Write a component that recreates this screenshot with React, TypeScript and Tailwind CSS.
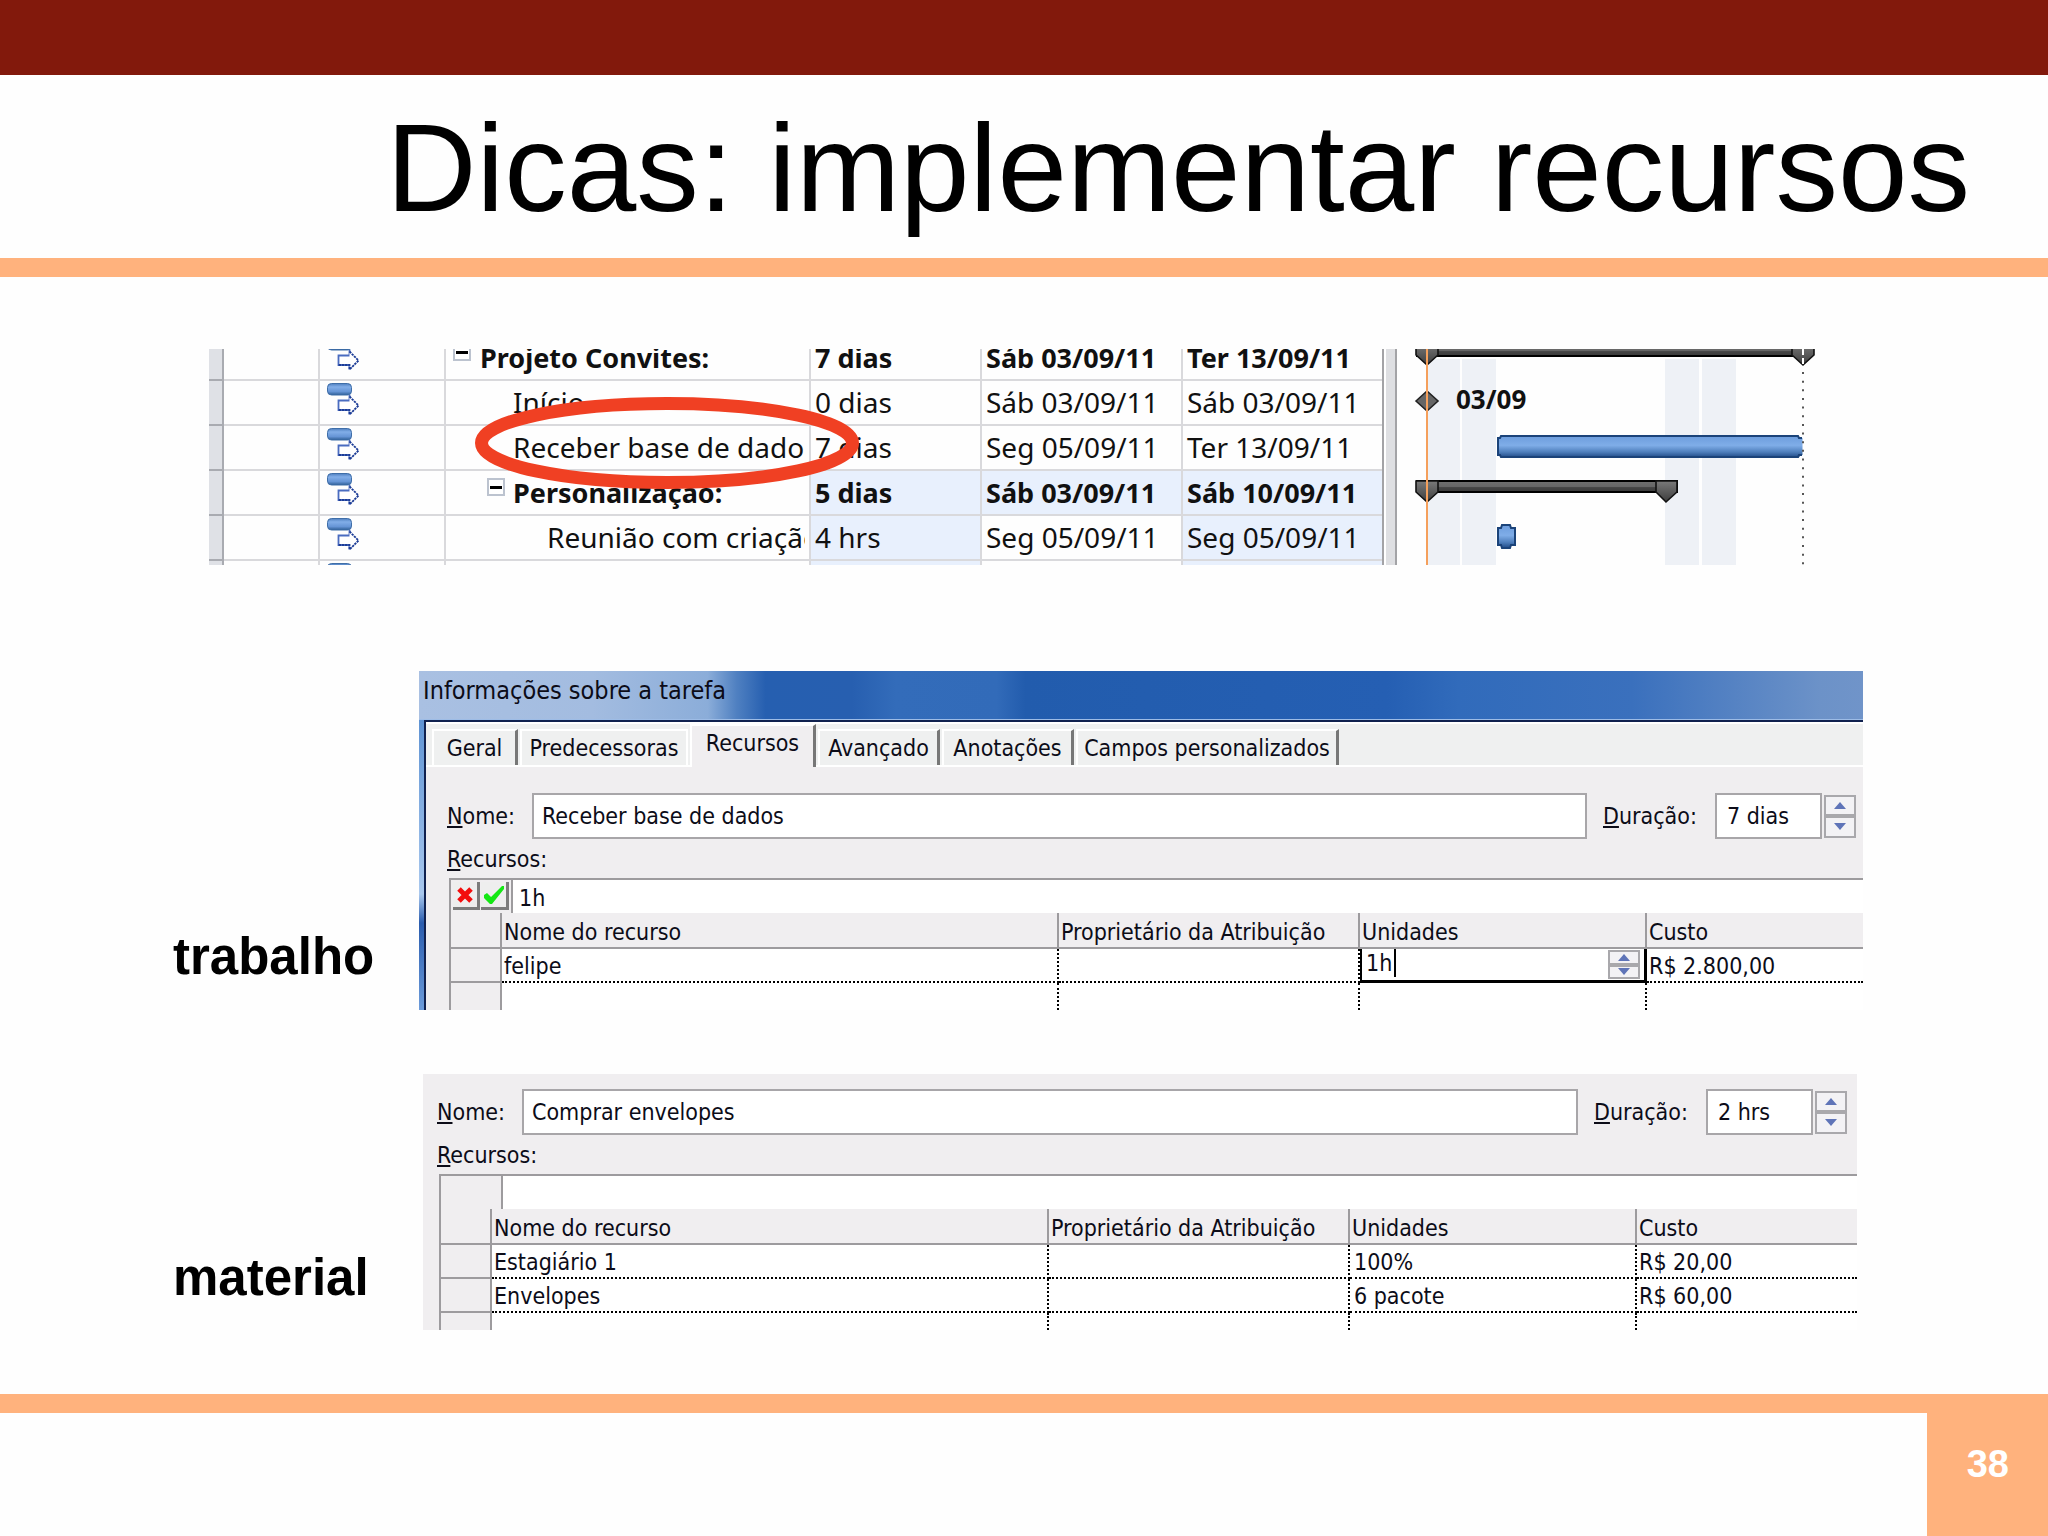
import { useState } from 'react'
import type { ReactNode } from 'react'

interface TaskRow {
  name: string
  level: 1 | 2 | 3
  duration: string
  start: string
  finish: string
  bold?: boolean
  collapsible?: boolean
  shaded?: 'all' | 'outer'
}

interface Resource {
  name: string
  units: string
  cost: string
  editing?: boolean
}

const tasks: TaskRow[] = [
  { name: 'Projeto Convites:', level: 1, duration: '7 dias', start: 'Sáb 03/09/11', finish: 'Ter 13/09/11', bold: true, collapsible: true },
  { name: 'Início', level: 2, duration: '0 dias', start: 'Sáb 03/09/11', finish: 'Sáb 03/09/11' },
  { name: 'Receber base de dado', level: 2, duration: '7 dias', start: 'Seg 05/09/11', finish: 'Ter 13/09/11' },
  { name: 'Personalização:', level: 2, duration: '5 dias', start: 'Sáb 03/09/11', finish: 'Sáb 10/09/11', bold: true, collapsible: true, shaded: 'all' },
  { name: 'Reunião com criação', level: 3, duration: '4 hrs', start: 'Seg 05/09/11', finish: 'Seg 05/09/11', shaded: 'outer' },
  { name: '', level: 2, duration: '', start: '', finish: '', shaded: 'outer' },
]

const indent = {
  1: 'pl-[34px]',
  2: 'pl-[67px]',
  3: 'pl-[101px]',
}

const togglePosition = {
  1: 'left-[7px]',
  2: 'left-[41px]',
  3: 'left-[75px]',
}

const tabs = [
  { label: 'Geral', width: 'w-[86px]' },
  { label: 'Predecessoras', width: 'w-[168px]' },
  { label: 'Recursos', width: 'w-[126px]' },
  { label: 'Avançado', width: 'w-[122px]' },
  { label: 'Anotações', width: 'w-[132px]' },
  { label: 'Campos personalizados', width: 'w-[263px]' },
]

const laborResources: Resource[] = [{ name: 'felipe', units: '1h', cost: 'R$ 2.800,00', editing: true }]

const materialResources: Resource[] = [
  { name: 'Estagiário 1', units: '100%', cost: 'R$ 20,00' },
  { name: 'Envelopes', units: '6 pacote', cost: 'R$ 60,00' },
]

function AutoScheduleIcon() {
  return (
    <svg width="36" height="43" viewBox="0 0 36 43" className="block">
      <defs>
        <linearGradient id="pill" x1="0" y1="0" x2="0" y2="1">
          <stop offset="0" stopColor="#4f7fbf" />
          <stop offset="0.3" stopColor="#82aee8" />
          <stop offset="0.7" stopColor="#6695d6" />
          <stop offset="1" stopColor="#2f5f96" />
        </linearGradient>
      </defs>
      <path d="M23.5 14V19.5H12.5V29H23.5V33.5" fill="#fff" stroke="#4a6cc0" strokeWidth="1.8" />
      <path d="M23.5 15.5 32.5 24.5 23.5 33.5" fill="#fff" />
      <path d="M23.5 15.5 32.5 24.5 23.5 33.5V29H12.5" fill="none" stroke="#1c3c96" strokeWidth="1.8" strokeDasharray="2.4 0.8" />
      <rect x="1.5" y="2.5" width="24" height="11.5" rx="4" fill="url(#pill)" stroke="#3f6ea8" />
    </svg>
  )
}

function TaskTable() {
  return (
    <table className="-mt-[13px] w-full table-fixed border-separate border-spacing-0 font-['Noto_Sans',sans-serif] leading-[43px] text-[#111]">
      <colgroup>
        <col className="w-[15px]" />
        <col className="w-24" />
        <col className="w-[126px]" />
        <col />
        <col className="w-[171px]" />
        <col className="w-[201px]" />
        <col className="w-[199px]" />
      </colgroup>
      <tbody>
        {tasks.map((task, idx) => {
          const tint = task.shaded ? 'bg-[#e8f0fd]' : ''
          const middleTint = task.shaded === 'all' ? 'bg-[#e8f0fd]' : ''
          const cell = 'h-[45px] border-b-2 border-r-2 border-[#d9d9dc] p-0 whitespace-nowrap overflow-hidden'
          return (
            <tr key={idx} className={task.bold ? 'text-[27px] font-bold' : 'text-[28px]'}>
              <td className="h-[45px] border-r-2 border-b-2 border-[#a9abb1] bg-[#dfe1e6] p-0" />
              <td className={cell} />
              <td className={`${cell} pl-[6px]`}>
                <AutoScheduleIcon />
              </td>
              <td className={`${cell} relative ${indent[task.level]}`}>
                {task.collapsible && (
                  <button
                    aria-label={task.name}
                    className={`absolute top-[7px] flex size-[18px] items-center justify-center border-2 border-[#bcc3cf] bg-white ${togglePosition[task.level]}`}
                  >
                    <span className="h-[3px] w-3 shrink-0 bg-black" />
                  </button>
                )}
                <div className="mr-1 overflow-hidden">{task.name}</div>
              </td>
              <td className={`${cell} pl-1 ${tint}`}>{task.duration}</td>
              <td className={`${cell} pl-1 ${middleTint}`}>{task.start}</td>
              <td className={`h-[45px] border-b-2 border-[#d9d9dc] p-0 pl-1 whitespace-nowrap ${tint}`}>{task.finish}</td>
            </tr>
          )
        })}
      </tbody>
    </table>
  )
}

function GanttChart() {
  return (
    <svg width="420" height="216" viewBox="0 0 420 216" className="block shrink-0">
      <defs>
        <linearGradient id="task" x1="0" y1="0" x2="0" y2="1">
          <stop offset="0" stopColor="#6c9cdc" />
          <stop offset="0.45" stopColor="#7fade8" />
          <stop offset="0.75" stopColor="#4f7fbc" />
          <stop offset="1" stopColor="#1f4a86" />
        </linearGradient>
        <linearGradient id="summary" x1="0" y1="0" x2="0" y2="1">
          <stop offset="0" stopColor="#707070" />
          <stop offset="0.5" stopColor="#666" />
          <stop offset="0.6" stopColor="#444" />
          <stop offset="1" stopColor="#3a3a3a" />
        </linearGradient>
        <linearGradient id="cap" x1="0" y1="0" x2="0" y2="1">
          <stop offset="0" stopColor="#7a7a7a" />
          <stop offset="1" stopColor="#3c3c3c" />
        </linearGradient>
      </defs>

      {/* weekends */}
      <g fill="#eef1f6">
        <rect x="31" y="10" width="32" height="206" />
        <rect x="65" y="10" width="34" height="206" />
        <rect x="268" y="10" width="34" height="206" />
        <rect x="305" y="10" width="34" height="206" />
      </g>

      <rect x="20" y="-4" width="387" height="11" fill="url(#summary)" stroke="#000" strokeWidth="2" />
      <g fill="url(#cap)" stroke="#111" strokeWidth="1.6">
        <path d="M19 -6H41V6L30 16 19 6Z" />
        <path d="M395 -6H417V6L406 16 395 6Z" />
      </g>
      <path d="M406 0V15" stroke="#fff" strokeWidth="2" strokeDasharray="6 3" />

      <path d="M19 52 30 42 41 52 30 62Z" fill="#666" stroke="#222" strokeWidth="1.6" />
      <text x="59" y="60" fill="#111" className="font-['Noto_Sans',sans-serif] text-[26px] font-bold">
        03/09
      </text>

      <path d="M104 86.5H401L402 89H405.5V106H403L402 108.5H104L103 106H100.5V89H103Z" fill="url(#task)" />
      <path d="M405 89H402L401 87H104L103 89H101V106H103L104 108H401L402 106H405" fill="none" stroke="#1b4379" strokeWidth="2" />

      <rect x="20" y="132" width="260" height="11" fill="url(#summary)" stroke="#000" strokeWidth="2" />
      <g fill="url(#cap)" stroke="#111" strokeWidth="1.6">
        <path d="M19 132H41V143L30 153 19 143Z" />
        <path d="M259 132H280V143L269 153 259 143Z" />
      </g>

      <path d="M105 176H113L114 179H118V196H114L113 199H105L104 196H101V179H104Z" fill="url(#task)" stroke="#1b4379" strokeWidth="2" />

      <path d="M406 23V216" stroke="#555" strokeWidth="2" strokeDasharray="2 6.65" />
      <path d="M30 0V216" stroke="#f5a05c" strokeWidth="2" />
    </svg>
  )
}

function Spinner({ className }: { className: string }) {
  return (
    <div className={`flex shrink-0 flex-col ${className}`}>
      <button aria-label="+" className="flex flex-1 items-center justify-center border-2 border-[#a9a8ac] bg-[#f3f2f5]">
        <svg width="12" height="7" viewBox="0 0 12 7">
          <path d="M0 7 6 0 12 7Z" fill="#5f74b8" />
        </svg>
      </button>
      <button aria-label="-" className="flex flex-1 items-center justify-center border-2 border-[#a9a8ac] bg-[#f3f2f5]">
        <svg width="12" height="7" viewBox="0 0 12 7">
          <path d="M0 0H12L6 7Z" fill="#5f74b8" />
        </svg>
      </button>
    </div>
  )
}

function Hotkey({ children }: { children: string }) {
  return (
    <>
      <span className="underline decoration-2 underline-offset-2">{children[0]}</span>
      {children.slice(1)}
    </>
  )
}

interface TaskFormProps {
  id: string
  name: string
  duration: string
  resources: Resource[]
  entry?: string
  lastRow: string
  costColumn: string
  className: string
  rowEnd: string
}

function TaskForm({ id, name, duration, resources, entry, lastRow, costColumn, className, rowEnd }: TaskFormProps) {
  const head = 'h-9 border-b-2 border-[#9d9b9e] bg-[#f0eef0] p-0 pt-1 pl-[2px] text-left font-normal'
  const dotted = 'border-dotted border-black'
  return (
    <div className={className}>
      <div className={`flex items-center ${rowEnd}`}>
        <label htmlFor={`${id}-name`} className="w-[85px]">
          <Hotkey>Nome:</Hotkey>
        </label>
        <input
          id={`${id}-name`}
          defaultValue={name}
          className="h-[46px] min-w-0 flex-1 border-2 border-[#a8a6a9] bg-white pl-2 outline-none"
        />
        <label htmlFor={`${id}-duration`} className="ml-4 w-[112px]">
          <Hotkey>Duração:</Hotkey>
        </label>
        <input
          id={`${id}-duration`}
          defaultValue={duration}
          className="h-[46px] w-[107px] border-2 border-[#a8a6a9] bg-white pl-[10px] outline-none"
        />
        <Spinner className="ml-[2px] h-[43px] w-8" />
      </div>
      <div className="h-[39px] leading-[41px]">
        <Hotkey>Recursos:</Hotkey>
      </div>

      <div className="ml-[2px] border-t-2 border-l-2 border-[#9d9b9e]">
        <div className="flex h-[33px]">
          <div className="flex w-[62px] shrink-0 gap-px border-r-2 border-[#9d9b9e] pt-[2px] pl-[2px]">
            {entry && (
              <>
                <button aria-label="x" className="flex h-7 w-[27px] items-center justify-center border-r-3 border-b-3 border-[#7c7c7c] bg-[#eee]">
                  <svg width="18" height="18" viewBox="0 0 18 18">
                    <path d="M3 3 15 15M15 3 3 15" stroke="#f30d0d" strokeWidth="5" />
                  </svg>
                </button>
                <button aria-label="ok" className="flex h-7 w-[28px] items-center justify-center border-r-3 border-b-3 border-[#7c7c7c] bg-[#eee]">
                  <svg width="22" height="20" viewBox="0 0 22 20">
                    <path d="M1 10 4 8 8 12 19 1H21V4L9 19H7L1 13Z" fill="#14e814" />
                  </svg>
                </button>
              </>
            )}
          </div>
          <input aria-label="Recursos" defaultValue={entry} className="min-w-0 flex-1 bg-white pt-[2px] pl-[6px] outline-none" />
        </div>

        <table className="w-full table-fixed border-separate border-spacing-0 whitespace-nowrap">
          <colgroup>
            <col className="w-[51px]" />
            <col />
            <col className="w-[301px]" />
            <col className="w-[287px]" />
            <col className={costColumn} />
          </colgroup>
          <thead>
            <tr>
              <th className={`${head} border-r-2`} />
              <th className={`${head} border-r-2`}>Nome do recurso</th>
              <th className={`${head} border-r-2`}>Proprietário da Atribuição</th>
              <th className={`${head} border-r-2`}>Unidades</th>
              <th className={head}>Custo</th>
            </tr>
          </thead>
          <tbody className="bg-white">
            {resources.map(res => (
              <tr key={res.name}>
                <td className="h-[34px] border-r-2 border-b-2 border-[#9d9b9e] bg-[#f0eef0] p-0" />
                <td className={`${dotted} border-r-2 border-b-2 p-0 pt-[2px] pl-[2px]`}>{res.name}</td>
                <td className={`${dotted} border-r-2 border-b-2 p-0`} />
                {res.editing ? (
                  <td className="border-r-3 border-b-3 border-l-2 border-black p-0">
                    <div className="flex h-[31px] items-start">
                      <input aria-label="Unidades" defaultValue={res.units} className="h-7 w-8 pl-1 outline-none" />
                      <span className="h-7 w-[2px] bg-black" />
                      <Spinner className="mt-px mr-1 ml-auto h-[29px] w-8" />
                    </div>
                  </td>
                ) : (
                  <td className={`${dotted} border-r-2 border-b-2 p-0 pt-[2px] pl-1`}>{res.units}</td>
                )}
                <td className={`${dotted} border-b-2 p-0 pt-[2px] pl-[2px]`}>{res.cost}</td>
              </tr>
            ))}
            <tr>
              <td className={`${lastRow} border-r-2 border-[#9d9b9e] bg-[#f0eef0] p-0`} />
              <td className={`${dotted} border-r-2 p-0`} />
              <td className={`${dotted} border-r-2 p-0`} />
              <td className={`${dotted} border-r-2 p-0`} />
              <td className="p-0" />
            </tr>
          </tbody>
        </table>
      </div>
    </div>
  )
}

function TabBar() {
  const [active, setActive] = useState('Recursos')

  return (
    <div className="flex h-[45px] items-end gap-[2px] border-t-2 border-b-2 border-white bg-[#eff0f0] pl-[6px]">
      {tabs.map(tab => {
        const isActive = tab.label === active
        const edge = tab.label === 'Predecessoras' ? 'border-r-2 border-r-white' : 'border-r-3 border-r-[#777]'
        return (
          <button
            key={tab.label}
            onClick={() => setActive(tab.label)}
            className={`${tab.width} ${edge} shrink-0 border-t-2 border-l-2 border-t-white border-l-white text-center whitespace-nowrap ${
              isActive ? '-mb-[2px] h-[43px] bg-[#f0eef0] pb-2' : 'h-9'
            }`}
          >
            {tab.label}
          </button>
        )
      })}
    </div>
  )
}

function SlideRow({ label, className, labelClass, children }: { label: string; className: string; labelClass: string; children: ReactNode }) {
  return (
    <section className={`flex ${className}`}>
      <h2 className={`shrink-0 text-[51px] leading-none font-bold ${labelClass}`}>{label}</h2>
      <div className="min-w-0 flex-1 font-['DejaVu_Sans_Condensed','DejaVu_Sans',sans-serif] text-[23px] leading-[26px] text-[#0c0c18]">
        {children}
      </div>
    </section>
  )
}

export default function App() {
  return (
    <div className="flex min-h-screen flex-col bg-[#fefefe] font-['Liberation_Sans',Arial,sans-serif] text-black">
      <header>
        <div className="h-[75px] bg-[#82190c]" />
        <h1 className="h-[183px] pt-[30px] pr-[78px] text-right text-[125px] leading-none whitespace-nowrap">
          Dicas: implementar recursos
        </h1>
        <div className="h-[19px] bg-[#ffb27d]" />
      </header>

      <main className="flex-1 pt-[72px] pb-16">
        <section className="relative mr-[231px] ml-[209px]">
          <div className="flex h-[216px] overflow-hidden">
            <div className="min-w-0 flex-1">
              <TaskTable />
            </div>
            <div className="w-[15px] shrink-0 border-r-2 border-l-2 border-[#a3a3a6] bg-[#dedfe2] shadow-[inset_2px_0_0_#fff]" />
            <GanttChart />
          </div>
          <svg width="384" height="92" viewBox="0 0 384 92" className="pointer-events-none absolute top-12 left-[266px]">
            <ellipse cx="192" cy="46" rx="185.5" ry="39.5" fill="none" stroke="#f04023" strokeWidth="13" />
          </svg>
        </section>

        <SlideRow label="trabalho" className="mt-[106px] mr-[185px] ml-[173px]" labelClass="w-[246px] pt-[260px]">
          <div className="flex h-12 items-center bg-linear-[90deg,#a9c0e2_0%,#a3bce0_12%,#8badd9_20%,#4f80c1_22%,#265fb0_24%,#275fb0_30%,#336cba_33%,#326bb9_40%,#225cad_42%,#255fb3_67%,#316bbb_72%,#3a70bd_84%,#6c92c8_97%,#7094c9_100%] pb-2 pl-1 text-[25px]">
            Informações sobre a tarefa
          </div>
          <div className="flex border-t border-[#9dbce6]">
            <div className="w-[5px] shrink-0 bg-linear-[180deg,#5f93d3_0%,#a9c8ee_60%,#2a5cae_70%,#6d9cdb_100%]" />
            <div className="min-w-0 flex-1 border-t-2 border-l-2 border-[#10214f] bg-[#f0eef0]">
              <TabBar />
              <TaskForm
                id="labor"
                name="Receber base de dados"
                duration="7 dias"
                resources={laborResources}
                entry="1h"
                lastRow="h-[27px]"
                costColumn="w-[216px]"
                className="pt-[26px] pl-[21px]"
                rowEnd="pr-[7px]"
              />
            </div>
          </div>
        </SlideRow>

        <SlideRow label="material" className="mt-16 mr-[191px] ml-[173px]" labelClass="w-[250px] pt-[178px]">
          <div className="bg-[#f0eef0]">
            <TaskForm
              id="material"
              name="Comprar envelopes"
              duration="2 hrs"
              resources={materialResources}
              lastRow="h-[17px]"
              costColumn="w-[220px]"
              className="pt-[15px] pl-[14px]"
              rowEnd="pr-[10px]"
            />
          </div>
        </SlideRow>
      </main>

      <footer>
        <div className="h-[19px] bg-[#ffb27d]" />
        <div className="flex h-[123px] justify-end">
          <div className="w-[121px] bg-[#ffb27d] pt-[32px] pr-[39px] text-right text-[38px] leading-none font-bold text-white">38</div>
        </div>
      </footer>
    </div>
  )
}
